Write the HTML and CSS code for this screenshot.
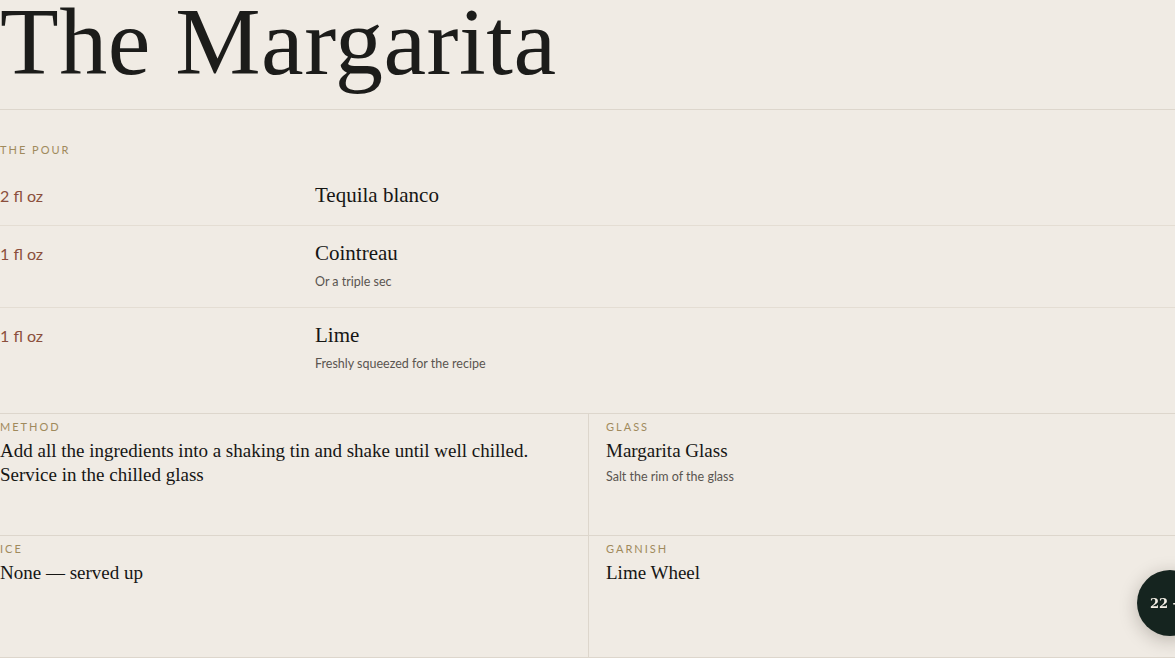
FILE: index.html
```html
<!DOCTYPE html>
<html lang="en">
<head>
<meta charset="utf-8">
<title>The Margarita</title>
<link rel="stylesheet" href="styles.css">
</head>
<body>
<header class="hero">
  <h1 class="title">The Margarita</h1>
</header>
<section class="pour">
  <div class="label">The Pour</div>
  <div class="row">
    <div class="amount">2 fl oz</div>
    <div class="ingredient"><div class="name">Tequila blanco</div></div>
  </div>
  <div class="row">
    <div class="amount">1 fl oz</div>
    <div class="ingredient"><div class="name">Cointreau</div><div class="sub">Or a triple sec</div></div>
  </div>
  <div class="row last">
    <div class="amount">1 fl oz</div>
    <div class="ingredient"><div class="name">Lime</div><div class="sub">Freshly squeezed for the recipe</div></div>
  </div>
</section>
<section class="details">
  <div class="cell">
    <div class="label">Method</div>
    <p class="text method">Add all the ingredients into a shaking tin and shake until well chilled. Service in the chilled glass</p>
  </div>
  <div class="cell right">
    <div class="label">Glass</div>
    <p class="text">Margarita Glass</p>
    <p class="sub">Salt the rim of the glass</p>
  </div>
  <div class="cell">
    <div class="label">Ice</div>
    <p class="text">None — served up</p>
  </div>
  <div class="cell right">
    <div class="label">Garnish</div>
    <p class="text">Lime Wheel</p>
  </div>
</section>
<button class="fab">22 →</button>
</body>
</html>
```
FILE: styles.css
```css
html, body {
  margin: 0;
  padding: 0;
}
body {
  background: #f0ebe4;
  color: #1c1c1a;
  font-family: "Liberation Serif", "Times New Roman", serif;
  width: 1175px;
  height: 658px;
  overflow: hidden;
}
.hero {
  border-bottom: 1px solid #ddd6cc;
  padding-bottom: 25px;
}
.title {
  margin: 0;
  font-weight: 400;
  font-size: 96px;
  line-height: 84px;
  letter-spacing: 0.5px;
}
.label {
  font-family: Lato, "Open Sans", sans-serif;
  font-size: 11px;
  line-height: 16px;
  letter-spacing: 2px;
  text-transform: uppercase;
  color: #a08a5c;
}
.pour {
  padding: 32px 0 24px;
  border-bottom: 1px solid #ddd6cc;
}
.pour .label {
  margin-bottom: 10px;
}
.row {
  display: grid;
  grid-template-columns: 315px 1fr;
  align-items: baseline;
  padding: 13px 0 16px;
  border-bottom: 1px solid #e4ddd3;
}
.row.last {
  border-bottom: none;
}
.amount {
  font-family: Lato, "Open Sans", sans-serif;
  font-size: 16px;
  color: #8b4f3c;
}
.name {
  font-size: 21px;
  line-height: 28px;
  color: #161614;
}
.sub {
  font-family: Lato, "Open Sans", sans-serif;
  font-size: 12.5px;
  line-height: 18px;
  color: #5a5550;
  margin: 6px 0 0;
}
.details {
  display: grid;
  grid-template-columns: 588px 1fr;
  grid-auto-rows: 122px;
}
.cell {
  padding-top: 5px;
  border-bottom: 1px solid #ddd6cc;
  box-sizing: border-box;
}
.cell.right {
  border-left: 1px solid #ddd6cc;
  padding-left: 17px;
}
.text {
  margin: 4px 0 0;
  font-size: 19px;
  line-height: 24px;
  color: #161614;
}
.method {
  max-width: 560px;
}
.cell .sub {
  margin-top: 5px;
}
.fab {
  position: fixed;
  left: 1137px;
  top: 570px;
  width: 66px;
  height: 66px;
  border-radius: 50%;
  border: none;
  background: #15241f;
  color: #f4efe6;
  font-family: "DejaVu Serif", serif;
  font-weight: 700;
  font-size: 13px;
  padding: 0 0 0 13px;
  text-align: left;
  white-space: nowrap;
  box-shadow: 0 4px 18px rgba(30, 25, 15, 0.25);
}
```
